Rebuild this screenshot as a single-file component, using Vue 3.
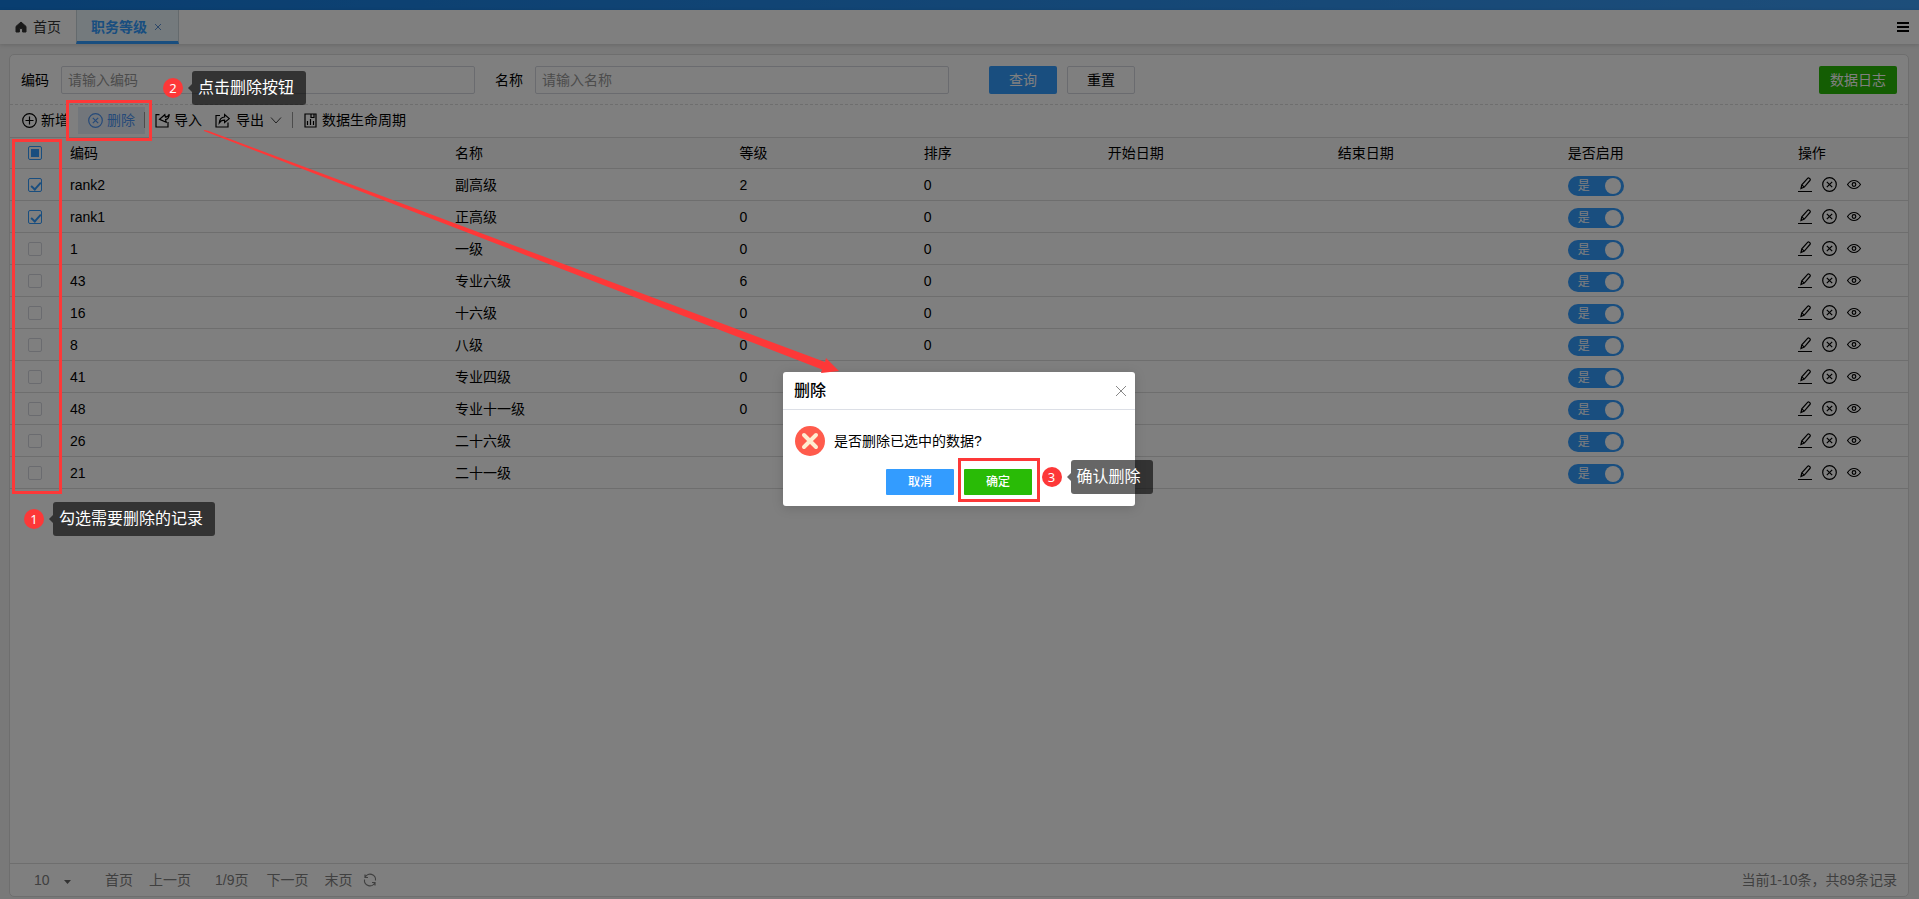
<script setup>
import { ref } from 'vue'

const columns = ['编码', '名称', '等级', '排序', '开始日期', '结束日期', '是否启用', '操作']
const rows = ref([
  { code: 'rank2', name: '副高级', level: 2, sort: 0, checked: true, on: true },
  { code: 'rank1', name: '正高级', level: 0, sort: 0, checked: true, on: true },
  { code: '1', name: '一级', level: 0, sort: 0, checked: false, on: true },
  { code: '43', name: '专业六级', level: 6, sort: 0, checked: false, on: true },
  { code: '16', name: '十六级', level: 0, sort: 0, checked: false, on: true },
  { code: '8', name: '八级', level: 0, sort: 0, checked: false, on: true },
  { code: '41', name: '专业四级', level: 0, sort: 0, checked: false, on: true },
  { code: '48', name: '专业十一级', level: 0, sort: 0, checked: false, on: true },
  { code: '26', name: '二十六级', level: '', sort: '', checked: false, on: true },
  { code: '21', name: '二十一级', level: '', sort: '', checked: false, on: true }
])
const code = ref('')
const name = ref('')
const pageSize = ref('10')
</script>

<template>
  <div class="page">
    <div class="topbar"></div>
    <nav class="tabs">
      <a class="tab home" href="#">
        <svg width="12" height="12" viewBox="0 0 12 12"><path d="M6 1 1 5.4V11h3.4V7.6h3.2V11H11V5.4z" fill="#333" stroke="#333" stroke-linejoin="round" /></svg>
        首页
      </a>
      <a class="tab active" href="#">
        职务等级
        <svg width="8" height="8" viewBox="0 0 8 8"><path d="M1 1l6 6M7 1 1 7" stroke="#5a8fd0" fill="none" /></svg>
      </a>
      <button class="menu" aria-label="菜单">
        <svg width="12" height="10" viewBox="0 0 12 10"><path d="M0 1h12M0 5h12M0 9h12" stroke="#000" stroke-width="2" /></svg>
      </button>
    </nav>

    <main class="panel">
      <form class="search" @submit.prevent>
        <label for="code">编码</label>
        <input id="code" v-model="code" class="field" type="text" placeholder="请输入编码" />
        <label for="name" class="second">名称</label>
        <input id="name" v-model="name" class="field" type="text" placeholder="请输入名称" />
        <button class="btn blue query" type="submit">查询</button>
        <button class="btn plain" type="reset">重置</button>
        <button class="btn green log" type="button">数据日志</button>
      </form>

      <div class="toolbar">
        <button class="tool add">
          <svg width="15" height="15" viewBox="0 0 15 15"><circle cx="7.5" cy="7.5" r="6.8" /><path d="M7.5 3.5v8M3.5 7.5h8" /></svg>
          新增
        </button>
        <button class="tool del">
          <svg width="15" height="15" viewBox="0 0 15 15"><circle cx="7.5" cy="7.5" r="6.8" /><path d="M4.8 4.8l5.4 5.4M10.2 4.8l-5.4 5.4" /></svg>
          删除
        </button>
        <button class="tool import">
          <svg width="15" height="15" viewBox="0 0 15 15"><path d="M4.500 1.600H1v12.400h12V9M14.300 1.200C13.500 3.200 12 4 10.400 4.100L9.800 1.700 4.500 6.300l6.700 3-.6-2.600c2.200-.6 3.600-2.600 3.700-5.500z" /></svg>
          导入
        </button>
        <button class="tool export">
          <svg width="15" height="15" viewBox="0 0 15 15"><path d="M5 2.500H1V14h12V9.500M4.300 9.800C4.600 6 6.500 4.200 9.600 4V1.600L14.300 5.600 9.600 9.400V7.200C7.200 7.200 5.500 8 4.300 9.800z" /></svg>
          导出
          <svg class="chevron" width="12" height="7" viewBox="0 0 12 7"><path d="M1 .5 6 6l5-5.500" /></svg>
        </button>
        <span class="sep"></span>
        <button class="tool cycle">
          <svg width="13" height="15" viewBox="0 0 13 15"><path d="M1 1h11v13H1zM3.500 8v4M6.500 6v6M9.500 8v4M7 1v3.500h3V1" /></svg>
          数据生命周期
        </button>
      </div>

      <table>
        <colgroup>
          <col class="c-check" /><col class="c-code" /><col class="c-name" />
          <col class="c-num" /><col class="c-num" />
          <col class="c-date" /><col class="c-date" /><col class="c-date" /><col />
        </colgroup>
        <thead>
          <tr>
            <th class="pick"><input type="checkbox" aria-label="全选" :indeterminate="true" /></th>
            <th v-for="c in columns" :key="c">{{ c }}</th>
          </tr>
        </thead>
        <tbody>
          <tr v-for="r in rows" :key="r.code">
            <td class="pick"><input v-model="r.checked" type="checkbox" :aria-label="r.name" /></td>
            <td>{{ r.code }}</td>
            <td>{{ r.name }}</td>
            <td>{{ r.level }}</td>
            <td>{{ r.sort }}</td>
            <td></td>
            <td></td>
            <td>
              <label class="switch"><input v-model="r.on" type="checkbox" /><span>是</span></label>
            </td>
            <td>
              <div class="ops">
                <button aria-label="编辑">
                  <svg width="14" height="15" viewBox="0 0 14 15"><path d="M0 14.500h14M3 11.500l.8-3.600L9.600 1.300q.8-.8 1.700 0l.6.500q.8.800 0 1.700L6.300 10.100zM3.800 7.900l2.500 2.200" /></svg>
                </button>
                <button aria-label="删除">
                  <svg width="15" height="15" viewBox="0 0 15 15"><circle cx="7.500" cy="7.500" r="6.800" /><path d="M4.800 4.800l5.400 5.400M10.200 4.800l-5.400 5.400" /></svg>
                </button>
                <button aria-label="查看">
                  <svg width="14" height="15" viewBox="0 0 14 15"><path d="M.5 7.500Q3.200 3.500 7 3.500t6.500 4Q10.800 11.500 7 11.500T.5 7.500z" /><circle cx="7" cy="7.500" r="1.800" /></svg>
                </button>
              </div>
            </td>
          </tr>
        </tbody>
      </table>

      <footer class="pager">
        <div class="size">
          <select v-model="pageSize" aria-label="每页条数"><option>10</option></select>
          <svg width="7" height="4" viewBox="0 0 7 4"><path d="M0 0h7L3.500 4z" /></svg>
        </div>
        <a href="#">首页</a>
        <a href="#">上一页</a>
        <span class="current">1/9页</span>
        <a href="#">下一页</a>
        <a href="#">末页</a>
        <button class="refresh" aria-label="刷新">
          <svg width="14" height="14" viewBox="0 0 14 14"><path d="M2 4.500A5.500 5.500 0 0 1 12.500 7.500M12 9.500A5.500 5.500 0 0 1 1.500 6.500M2 1.500v3h3M12 12.500v-3H9" /></svg>
        </button>
        <span class="total">当前1-10条，共89条记录</span>
      </footer>
    </main>

    <div class="mask">
      <section class="dialog" role="dialog" aria-labelledby="dialog-title">
        <header>
          <h2 id="dialog-title">删除</h2>
          <button class="close" aria-label="关闭">
            <svg width="12" height="12" viewBox="0 0 12 12"><path d="M1 1l10 10M11 1 1 11" stroke="#888" fill="none" /></svg>
          </button>
        </header>
        <div class="message">
          <svg width="30" height="30" viewBox="0 0 30 30">
            <circle cx="15" cy="15" r="15" fill="#ff5b4c" />
            <path d="M9 9l12 12M21 9 9 21" stroke="#ffedd0" stroke-width="4" stroke-linecap="round" />
          </svg>
          <p>是否删除已选中的数据?</p>
        </div>
        <div class="actions">
          <button class="btn small cancel">取消</button>
          <button class="btn small confirm">确定</button>
        </div>
      </section>
    </div>

    <div class="frame frame-checks"></div>
    <div class="frame frame-delete"></div>
    <div class="frame frame-confirm"></div>
    <svg class="arrow" width="640" height="250" viewBox="0 0 640 250">
      <path d="M0 0 4 .7 621 232 622 228 635 241 617 243 618 239.500 0 1z" fill="#fd3838" />
    </svg>
    <div class="note note-1"><b>1</b><span>勾选需要删除的记录</span></div>
    <div class="note note-2"><b>2</b><span>点击删除按钮</span></div>
    <div class="note note-3"><b>3</b><span>确认删除</span></div>
  </div>
</template>

<style>
body {
  margin: 0;
}
</style>

<style scoped>
* {
  box-sizing: border-box;
}
.page {
  position: relative;
  display: flex;
  flex-direction: column;
  min-height: 100vh;
  background: #f2f2f2;
  color: #000;
  font: 14px/20px "Liberation Sans", "Noto Sans CJK SC", sans-serif;
}
button,
input,
select {
  padding: 0;
  border: 0;
  background: none;
  color: inherit;
  font: inherit;
}
a {
  color: inherit;
  text-decoration: none;
}
svg {
  flex: none;
}
.topbar {
  height: 10px;
  background: linear-gradient(90deg, #127ce0, #3b9cf5);
}
.tabs {
  display: flex;
  align-items: stretch;
  height: 34px;
  background: #fff;
  box-shadow: 0 1px 4px rgba(0, 0, 0, 0.15);
}
.tab {
  display: flex;
  align-items: center;
}
.home {
  gap: 6px;
  width: 76px;
  padding-left: 15px;
  color: #333;
}
.active {
  gap: 7px;
  width: 103px;
  padding: 3px 0 0 14px;
  border: solid #c8d4da;
  border-width: 0 1px;
  border-bottom: 3px solid #339cff;
  background: #e9f5fb;
  color: #339cff;
  font-weight: bold;
}
.menu {
  display: flex;
  align-items: center;
  margin: 0 10px 0 auto;
}
.panel {
  display: flex;
  flex: 1;
  flex-direction: column;
  margin: 10px 10px 2px 9px;
  border: 1px solid #dcdcdc;
  border-radius: 5px;
  background: #fff;
}
.search {
  display: flex;
  align-items: center;
  height: 50px;
  padding: 0 11px;
  border-bottom: 1px dashed #dcdcdc;
}
.search .field {
  flex: 0 1 414px;
  min-width: 0;
  height: 28px;
  margin-left: 12px;
  padding: 0 6px;
  border: 1px solid #d4d7de;
  border-radius: 2px;
}
.field::placeholder {
  color: #999;
  opacity: 1;
}
.second {
  margin-left: 20px;
}
.btn {
  width: 68px;
  height: 28px;
  border-radius: 2px;
  color: #fff;
  text-align: center;
}
.blue,
.cancel {
  background: #339cff;
}
.query {
  margin: 0 10px 0 40px;
}
.plain {
  border: 1px solid #d4d7de;
  color: #000;
}
.green,
.confirm {
  background: #29bb06;
}
.log {
  width: 78px;
  margin-left: auto;
}
.toolbar {
  display: flex;
  align-items: center;
  height: 33px;
  padding: 0 0 2px 12px;
  border-bottom: 1px solid #dcdcdc;
}
.tool {
  display: flex;
  align-items: center;
  gap: 4px;
  height: 27px;
  white-space: nowrap;
}
.tool svg,
.ops svg,
.refresh svg {
  fill: none;
  stroke: currentColor;
  stroke-width: 1.2;
}
.tool .chevron {
  stroke: #444;
  stroke-width: 1;
}
.add {
  width: 56px;
}
.del {
  width: 67px;
  padding-left: 10px;
  background: linear-gradient(#999, #999) right center / 1px 16px no-repeat #e4edf6;
  color: #4d94f2;
}
.import {
  margin-left: 10px;
}
.export {
  gap: 6px;
  margin-left: 13px;
}
.sep {
  width: 1px;
  height: 16px;
  margin: 0 11px 0 10px;
  background: #999;
}
.cycle {
  gap: 5px;
}
table {
  width: 100%;
  border-collapse: separate;
  border-spacing: 0;
  table-layout: fixed;
}
.c-check {
  width: 50px;
}
.c-code {
  width: 20.28%;
}
.c-name {
  width: 15%;
}
.c-num {
  width: 9.7%;
}
.c-date {
  width: 12.12%;
}
th,
td {
  height: 32px;
  padding: 0 10px;
  border-bottom: 1px solid #dcdcdc;
  font-weight: normal;
  text-align: left;
}
th {
  height: 31px;
  background: #fafafa;
}
.pick {
  padding: 0 0 0 18px;
}
.pick input {
  display: block;
  width: 14px;
  height: 14px;
  margin: 0;
  border: 1px solid #d4d7de;
  border-radius: 2px;
  appearance: none;
}
.pick input:checked,
.pick input:indeterminate {
  border-color: #339cff;
}
.pick input:indeterminate {
  background: #339cff content-box;
  padding: 2px;
}
.pick input:checked::after {
  display: block;
  width: 4px;
  height: 8px;
  margin: 1px 0 0 4px;
  border: solid #339cff;
  border-width: 0 2px 2px 0;
  content: "";
  transform: rotate(42deg);
}
.switch {
  display: flex;
  flex-direction: row-reverse;
  align-items: center;
  justify-content: space-between;
  width: 56px;
  height: 20px;
  margin-top: 2px;
  padding: 0 3px 0 10px;
  border-radius: 10px;
  background: #339cff;
  color: #fff;
  font-size: 12px;
}
.switch input {
  width: 16px;
  height: 16px;
  margin: 0;
  border-radius: 50%;
  background: #fff;
  appearance: none;
}
.ops {
  display: flex;
  gap: 10px;
}
.ops button,
.refresh {
  display: flex;
}
.pager {
  display: flex;
  align-items: center;
  height: 33px;
  margin-top: auto;
  padding: 0 11px 0 24px;
  border-top: 1px solid #dcdcdc;
  color: #808080;
}
.size {
  display: flex;
  align-items: center;
  width: 71px;
}
.size select {
  width: 30px;
  appearance: none;
}
.size svg {
  margin-top: 4px;
  fill: #666;
}
.pager a {
  margin-right: 16px;
}
.current {
  margin: 0 18px 0 8px;
}
.pager .refresh {
  margin-left: -5px;
}
.total {
  margin-left: auto;
}
.mask {
  position: absolute;
  inset: 0;
  display: flex;
  align-items: center;
  justify-content: center;
  padding: 0 1px 21px 0;
  background: rgba(0, 0, 0, 0.5);
}
.dialog {
  width: 352px;
  border-radius: 3px;
  background: #fff;
  box-shadow: 0 2px 12px rgba(0, 0, 0, 0.15);
}
.dialog header {
  display: flex;
  align-items: center;
  justify-content: space-between;
  height: 38px;
  padding: 0 8px 0 11px;
  border-bottom: 1px solid #dcdfe6;
}
h2 {
  margin: 0;
  font-size: 16px;
  font-weight: 500;
}
.close {
  display: flex;
}
.message {
  display: flex;
  align-items: center;
  gap: 9px;
  padding: 16px 12px 13px;
}
.message p {
  margin: 0;
}
.actions {
  display: flex;
  gap: 10px;
  padding: 0 0 11px 103px;
}
.small {
  height: 26px;
  border-radius: 1px;
  font-size: 12px;
  font-weight: 500;
}
.frame {
  position: absolute;
  border: 3px solid #fd3838;
}
.frame-checks {
  top: 139px;
  left: 12px;
  width: 50px;
  height: 355px;
}
.frame-delete {
  top: 100px;
  left: 66px;
  width: 86px;
  height: 41px;
}
.frame-confirm {
  top: 458px;
  left: calc(50% - 2px);
  width: 82px;
  height: 44px;
}
.arrow {
  position: absolute;
  top: 130px;
  left: 204px;
}
.note {
  position: absolute;
  display: flex;
  align-items: center;
  gap: 9px;
  color: #fff;
  white-space: nowrap;
}
.note b {
  width: 20px;
  border-radius: 50%;
  background: #fd3838;
  font: 13px/20px "Noto Sans", sans-serif;
  text-align: center;
}
.note span {
  position: relative;
  padding: 0 12px 0 6px;
  border-radius: 3px;
  background: rgba(0, 0, 0, 0.6);
  font-size: 16px;
  line-height: 34px;
}
.note span::before {
  position: absolute;
  top: 13px;
  left: -4px;
  border: solid transparent;
  border-width: 4px 4px 4px 0;
  border-right-color: rgba(0, 0, 0, 0.6);
  content: "";
}
.note-1 {
  top: 502px;
  left: 24px;
}
.note-2 {
  top: 71px;
  left: 163px;
}
.note-3 {
  top: 460px;
  left: calc(50% + 82px);
}
</style>
